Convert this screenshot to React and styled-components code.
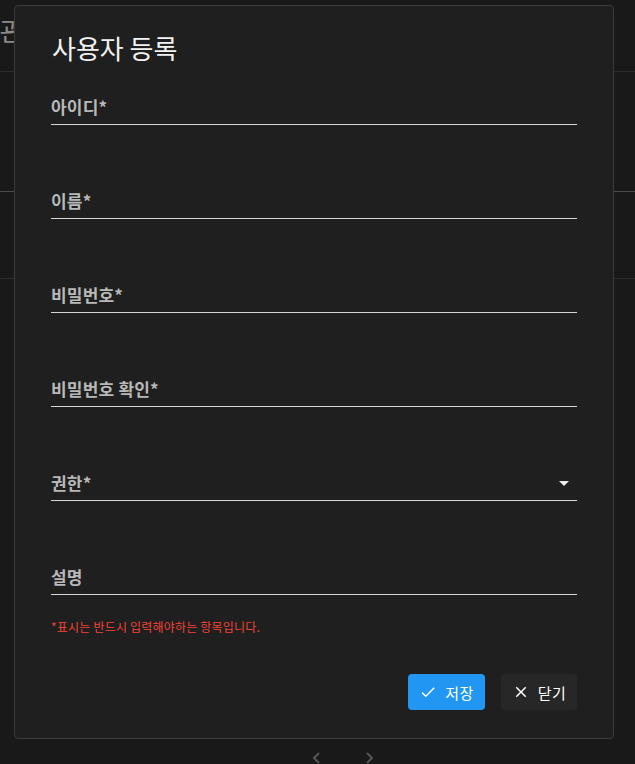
import React from "react";
import styled, { createGlobalStyle } from "styled-components";

const Global = createGlobalStyle`
  html, body { margin: 0; padding: 0; background: #191919; }
  body { font-family: "Noto Sans CJK KR", "Noto Sans", sans-serif; overflow: hidden; }
  #root { width: 635px; height: 764px; }
`;

const Page = styled.div`
  position: relative;
  width: 635px;
  height: 764px;
  overflow: hidden;
  background: #191919;
`;

const BgHeader = styled.div`
  height: 72px;
  border-bottom: 1px solid #2c2c2c;
  box-sizing: border-box;
  display: flex;
  align-items: flex-start;
  padding-top: 14px;
  margin-left: -78px;
`;

const BgTitle = styled.div`
  font-size: 26px;
  color: #8a8a8a;
  line-height: 32px;
`;

const BgTableHead = styled.div`
  height: 120px;
  display: flex;
  align-items: flex-end;
  padding-bottom: 6px;
  box-sizing: border-box;
  margin-left: -40px;
  border-bottom: 1px solid #4a4a4a;
`;

const BgHeadText = styled.div`
  font-family: "Liberation Sans", sans-serif;
  font-weight: 700;
  font-size: 17px;
  color: #7a7a7a;
  line-height: 20px;
`;

const BgRow = styled.div`
  height: 86px;
  border-bottom: 1px solid #2c2c2c;
`;

const BgPager = styled.div`
  position: absolute;
  left: 0;
  right: 0;
  top: 751px;
  display: flex;
  justify-content: center;
  gap: 38px;
  padding-left: 50px;
`;

const Dialog = styled.div`
  position: absolute;
  left: 14px;
  top: 5px;
  width: 600px;
  height: 734px;
  box-sizing: border-box;
  background: #1f1f1f;
  border: 1px solid #3a3a3a;
  border-radius: 4px;
  display: flex;
  flex-direction: column;
  padding: 26px 36px 0 36px;
`;

const Title = styled.h2`
  margin: 0;
  font-size: 26px;
  line-height: 32px;
  font-weight: 400;
  color: #f2f2f2;
  padding-left: 1px;
`;

const Fields = styled.div`
  display: flex;
  flex-direction: column;
  gap: 66px;
  margin-top: 33px;
`;

const Field = styled.div`
  display: flex;
  align-items: center;
  justify-content: space-between;
  border-bottom: 1px solid #d6d6d6;
  padding-bottom: 7px;
`;

const Label = styled.span`
  font-size: 17px;
  line-height: 20px;
  font-weight: 700;
  letter-spacing: 0.2px;
  color: #b8b8b8;
`;

const Arrow = styled.span`
  width: 0;
  height: 0;
  border-left: 5px solid transparent;
  border-right: 5px solid transparent;
  border-top: 5px solid #ededed;
  margin-right: 8px;
`;

const Hint = styled.div`
  margin-top: 24px;
  font-size: 12px;
  line-height: 16px;
  letter-spacing: 0.2px;
  color: #f44336;
`;

const Actions = styled.div`
  display: flex;
  justify-content: flex-end;
  gap: 16px;
  margin-top: 39px;
`;

const Button = styled.button`
  height: 36px;
  width: ${(p) => p.$w}px;
  border: none;
  border-radius: 4px;
  background: ${(p) => (p.$primary ? "#2196f3" : "#272727")};
  color: #ffffff;
  display: flex;
  align-items: center;
  justify-content: center;
  gap: 8px;
  font-family: "Noto Sans CJK KR", sans-serif;
  font-size: 15px;
  font-weight: 400;
  padding: 0;
  letter-spacing: 0.5px;
`;

const fields = ["아이디*", "이름*", "비밀번호*", "비밀번호 확인*", "권한*", "설명"];

export default function App() {
  return (
    <Page>
      <Global />
      <BgHeader>
        <BgTitle>사용자 관리</BgTitle>
      </BgHeader>
      <BgTableHead>
        <BgHeadText>Stat</BgHeadText>
      </BgTableHead>
      <BgRow />
      <BgPager>
        <svg width="14" height="14" viewBox="0 0 14 14">
          <path d="M9 2 L4 7 L9 12" stroke="#555" strokeWidth="2" fill="none" />
        </svg>
        <svg width="14" height="14" viewBox="0 0 14 14">
          <path d="M5 2 L10 7 L5 12" stroke="#555" strokeWidth="2" fill="none" />
        </svg>
      </BgPager>
      <Dialog>
        <Title>사용자 등록</Title>
        <Fields>
          {fields.map((f) => (
            <Field key={f}>
              <Label>{f}</Label>
              {f === "권한*" && <Arrow />}
            </Field>
          ))}
        </Fields>
        <Hint>*표시는 반드시 입력해야하는 항목입니다.</Hint>
        <Actions>
          <Button $primary $w={77}>
            <svg width="18" height="18" viewBox="0 0 24 24">
              <path d="M21 7L9 19l-5.5-5.5 1.41-1.41L9 16.17 19.59 5.59 21 7z" fill="#fff" />
            </svg>
            저장
          </Button>
          <Button $w={76}>
            <svg width="18" height="18" viewBox="0 0 24 24">
              <path d="M19 6.41L17.59 5 12 10.59 6.41 5 5 6.41 10.59 12 5 17.59 6.41 19 12 13.41 17.59 19 19 17.59 13.41 12z" fill="#fff" />
            </svg>
            닫기
          </Button>
        </Actions>
      </Dialog>
    </Page>
  );
}
